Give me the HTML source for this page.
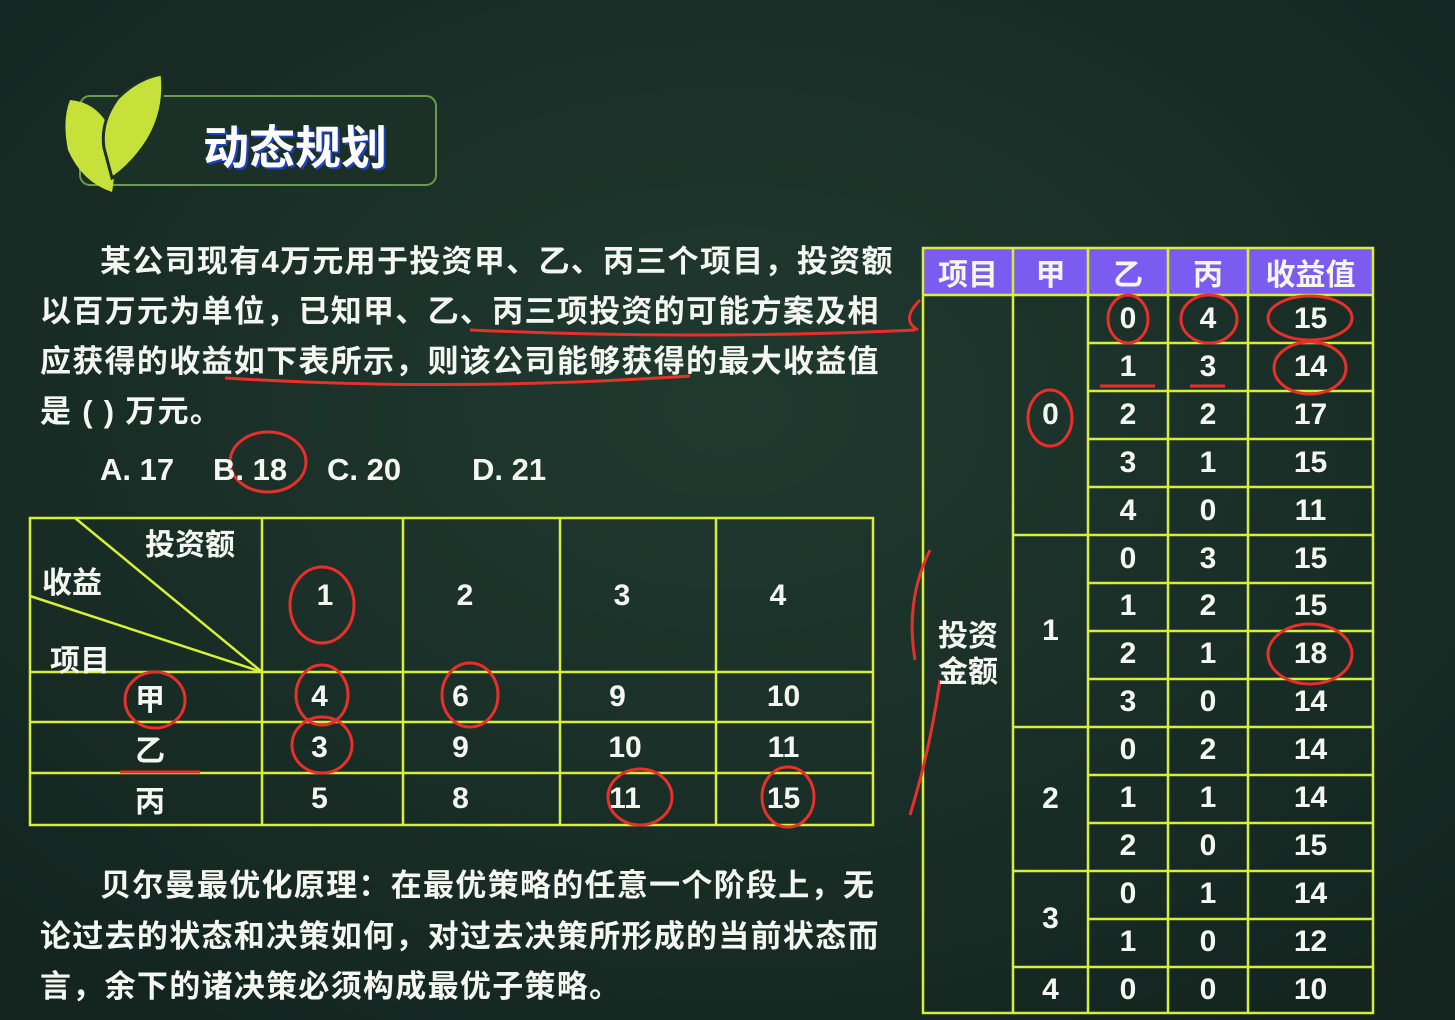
<!DOCTYPE html>
<html><head><meta charset="utf-8"><style>
body{margin:0;width:1455px;height:1020px;background:#172a24;overflow:hidden;position:relative;font-family:"Liberation Sans","Noto Sans CJK SC",sans-serif;color:#f4f6f2}
.a{position:absolute}
.p{position:absolute;left:40px;font-size:31px;font-weight:bold;white-space:nowrap;letter-spacing:1.3px}
.c{position:absolute;display:flex;align-items:center;justify-content:center;font-size:30px;font-weight:bold}
.o{position:absolute;top:452px;font-size:31px;font-weight:bold}
</style></head><body>
<svg class="a" style="left:0;top:0" width="1455" height="1020">
<defs><radialGradient id="g" cx="50%" cy="40%" r="70%"><stop offset="0" stop-color="#203a30"/><stop offset="1" stop-color="#142520"/></radialGradient></defs>
<rect width="1455" height="1020" fill="url(#g)"/>
<rect x="80" y="96" width="356" height="89" rx="10" fill="#1b3128" stroke="#6a9a4a" stroke-width="2"/>
<path d="M70 100 Q95 102 108 125 Q118 160 112 192 Q82 182 68 150 Q62 120 70 100Z" fill="#c6e23a"/>
<path d="M162 74 Q138 78 118 98 Q100 122 104 148 L112 178 Q132 165 148 140 Q166 110 162 74Z" fill="#c6e23a" stroke="#1b3128" stroke-width="3"/>
<g stroke="#d6ef3a" stroke-width="2.5" fill="none">
<rect x="30" y="518" width="843" height="307"/>
<line x1="262" y1="518" x2="262" y2="825"/><line x1="403" y1="518" x2="403" y2="825"/>
<line x1="560" y1="518" x2="560" y2="825"/><line x1="716" y1="518" x2="716" y2="825"/>
<line x1="30" y1="672" x2="873" y2="672"/><line x1="30" y1="722" x2="873" y2="722"/><line x1="30" y1="773" x2="873" y2="773"/>
<line x1="75" y1="518" x2="262" y2="672"/><line x1="30" y1="596" x2="262" y2="672"/>
</g>
<rect x="923" y="248" width="450" height="47" fill="#7c5cf0"/>
<g stroke="#d6ef3a" stroke-width="2.5" fill="none">
<rect x="923" y="248" width="450" height="765"/>
<line x1="923" y1="295" x2="1373" y2="295"/>
<line x1="1013" y1="248" x2="1013" y2="1013"/><line x1="1088" y1="248" x2="1088" y2="1013"/>
<line x1="1168" y1="248" x2="1168" y2="1013"/><line x1="1248" y1="248" x2="1248" y2="1013"/>
<path d="M1088 343H1373M1088 391H1373M1088 439H1373M1088 487H1373M1013 535H1373M1088 583H1373M1088 631H1373M1088 679H1373M1013 727H1373M1088 775H1373M1088 823H1373M1013 871H1373M1088 919H1373M1013 967H1373"/>
</g>
<g stroke="#e8302a" stroke-width="3" fill="none">
<ellipse cx="1128" cy="319" rx="20" ry="24"/><ellipse cx="1209" cy="319" rx="28" ry="24"/><ellipse cx="1310" cy="318" rx="42" ry="22"/>
<ellipse cx="1310" cy="368" rx="36" ry="26"/><ellipse cx="1050" cy="418" rx="22" ry="28"/><ellipse cx="1310" cy="654" rx="42" ry="30"/>
<ellipse cx="322" cy="605" rx="32" ry="38"/><ellipse cx="155" cy="700" rx="30" ry="28"/><ellipse cx="322" cy="695" rx="26" ry="30"/>
<ellipse cx="470" cy="695" rx="28" ry="32"/><ellipse cx="322" cy="745" rx="30" ry="28"/><ellipse cx="640" cy="797" rx="32" ry="28"/>
<ellipse cx="788" cy="797" rx="26" ry="30"/><ellipse cx="268" cy="462" rx="38" ry="30"/>
<path d="M920 300Q900 320 918 330"/><path d="M930 550Q905 600 915 660"/><path d="M940 680Q930 750 910 815"/>
<path d="M1100 386H1155M1190 386H1225M225 378Q450 392 690 376M470 330Q700 340 915 330M120 772H200"/>
</g>
</svg>
<div class="a" style="left:203px;top:112px;font-size:46px;font-weight:bold;color:#fff;text-shadow:2px 2px 0 #2040c0">动态规划</div>
<div class="p" style="top:236px;left:100px">某公司现有4万元用于投资甲、乙、丙三个项目，投资额</div>
<div class="p" style="top:286px">以百万元为单位，已知甲、乙、丙三项投资的可能方案及相</div>
<div class="p" style="top:336px">应获得的收益如下表所示，则该公司能够获得的最大收益值</div>
<div class="p" style="top:386px">是 ( ) 万元。</div>
<div class="o" style="left:100px">A. 17</div><div class="o" style="left:213px">B. 18</div><div class="o" style="left:327px">C. 20</div><div class="o" style="left:472px">D. 21</div>
<div class="p" style="top:860px;left:100px">贝尔曼最优化原理：在最优策略的任意一个阶段上，无</div>
<div class="p" style="top:911px">论过去的状态和决策如何，对过去决策所形成的当前状态而</div>
<div class="p" style="top:961px">言，余下的诸决策必须构成最优子策略。</div>
<div class="a" style="left:145px;top:520px;font-size:30px;font-weight:bold">投资额</div>
<div class="a" style="left:42px;top:558px;font-size:30px;font-weight:bold">收益</div>
<div class="a" style="left:50px;top:636px;font-size:30px;font-weight:bold">项目</div>
<div class="c" style="left:295px;top:570px;width:60px;height:52px">1</div>
<div class="c" style="left:435px;top:570px;width:60px;height:52px">2</div>
<div class="c" style="left:592px;top:570px;width:60px;height:52px">3</div>
<div class="c" style="left:748px;top:570px;width:60px;height:52px">4</div>
<div class="c" style="left:30px;top:672px;width:240px;height:50px">甲</div><div class="c" style="left:262px;top:672px;width:115px;height:50px">4</div><div class="c" style="left:403px;top:672px;width:115px;height:50px">6</div><div class="c" style="left:560px;top:672px;width:115px;height:50px">9</div><div class="c" style="left:716px;top:672px;width:135px;height:50px">10</div>
<div class="c" style="left:30px;top:722px;width:240px;height:51px">乙</div><div class="c" style="left:262px;top:722px;width:115px;height:51px">3</div><div class="c" style="left:403px;top:722px;width:115px;height:51px">9</div><div class="c" style="left:560px;top:722px;width:130px;height:51px">10</div><div class="c" style="left:716px;top:722px;width:135px;height:51px">11</div>
<div class="c" style="left:30px;top:773px;width:240px;height:52px">丙</div><div class="c" style="left:262px;top:773px;width:115px;height:52px">5</div><div class="c" style="left:403px;top:773px;width:115px;height:52px">8</div><div class="c" style="left:560px;top:773px;width:130px;height:52px">11</div><div class="c" style="left:716px;top:773px;width:135px;height:52px">15</div>
<div class="c" style="left:923px;top:248px;width:90px;height:47px">项目</div><div class="c" style="left:1013px;top:248px;width:75px;height:47px">甲</div><div class="c" style="left:1088px;top:248px;width:80px;height:47px">乙</div><div class="c" style="left:1168px;top:248px;width:80px;height:47px">丙</div><div class="c" style="left:1248px;top:248px;width:125px;height:47px">收益值</div>
<div class="c" style="left:923px;top:615px;width:90px;height:80px;line-height:36px;text-align:center">投资<br>金额</div>
<div class="c" style="left:1013px;top:295px;width:75px;height:240px">0</div>
<div class="c" style="left:1013px;top:535px;width:75px;height:192px">1</div>
<div class="c" style="left:1013px;top:727px;width:75px;height:144px">2</div>
<div class="c" style="left:1013px;top:871px;width:75px;height:96px">3</div>
<div class="c" style="left:1013px;top:967px;width:75px;height:46px">4</div>
<div id="r"></div>
<script>
var d=[[0,4,15],[1,3,14],[2,2,17],[3,1,15],[4,0,11],[0,3,15],[1,2,15],[2,1,18],[3,0,14],[0,2,14],[1,1,14],[2,0,15],[0,1,14],[1,0,12],[0,0,10]];
var h='',xs=[1088,1168,1248],ws=[80,80,125];
d.forEach(function(r,i){r.forEach(function(v,j){h+='<div class="c" style="left:'+xs[j]+'px;top:'+(295+i*47.9)+'px;width:'+ws[j]+'px;height:48px">'+v+'</div>';});});
document.getElementById('r').innerHTML=h;
</script>
</body></html>
